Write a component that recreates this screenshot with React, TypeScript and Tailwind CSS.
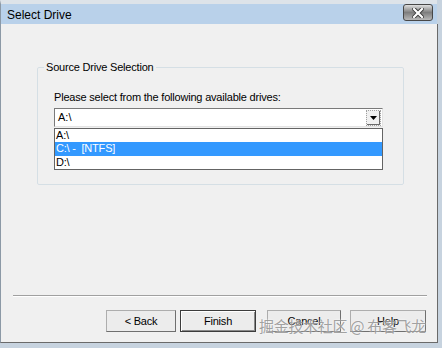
import React from 'react';

const drives = ['A:\\', 'C:\\ -  [NTFS]', 'D:\\'];

function WinButton({ label, primary }: { label: string; primary?: boolean }) {
  return (
    <button
      className={
        'h-[22px] bg-[#ececec] text-[11px] tracking-[-0.2px] text-black ' +
        (primary
          ? 'border border-[#3c3c3c] shadow-[inset_1px_1px_0_#ffffff,inset_-1px_-1px_0_#8a8a8a]'
          : 'border border-[#adadad] border-r-[#6f6f6f] border-b-[#6f6f6f]')
      }
    >
      {label}
    </button>
  );
}

export default function App() {
  const selected = 1;

  return (
    <div className="relative w-[442px] h-[348px] overflow-hidden bg-[#c7d3df] flex flex-col font-['Liberation_Sans',Arial,sans-serif]">
      {/* title bar */}
      <div className="h-[24px] border-t-[4px] border-[#dde3e9] bg-[#b9d1ea] border-l border-l-[#8c99a6] mr-[5px] flex items-center justify-between pl-[6px] pr-[4px]">
        <span className="text-[12px] text-black leading-none mt-[1px]">Select Drive</span>
        <div className="w-[30px] h-[17px] -mt-[3px] rounded-[3px] border border-[#474747] bg-gradient-to-b from-[#e0e0e0] via-[#7e7e7e] to-[#b8b8b8] flex items-center justify-center">
          <svg width="12" height="10" viewBox="0 0 12 10">
            <path d="M2 1 L10 9 M10 1 L2 9" stroke="#3a3a3a" strokeWidth="4" strokeLinecap="square" />
            <path d="M2 1 L10 9 M10 1 L2 9" stroke="#ffffff" strokeWidth="2.2" strokeLinecap="square" />
          </svg>
        </div>
      </div>

      {/* body */}
      <div className="flex-1 mb-[5px] mr-[4px] bg-[#f0f0f0] border-l border-l-[#8c99a6] border-r border-r-[#6a6a6a] border-b border-b-[#6a6a6a] flex flex-col text-black">
        <fieldset className="ml-[36px] mt-[36px] w-[367px] border border-[#d5dfe5] rounded-[2px] pl-[16px] pb-[14px]">
          <legend className="-ml-[10px] px-[2px] text-[11px] tracking-[-0.2px] leading-[14px]">Source Drive Selection</legend>
          <p className="mt-[16px] text-[11px] tracking-[-0.2px] leading-[14px]">Please select from the following available drives:</p>

          {/* combo box */}
          <div className="mt-[4px] w-[329px] h-[19px] bg-white border border-[#7a7a7a] border-r-[#e3e3e3] border-b-[#e3e3e3] flex items-center justify-between">
            <span className="pl-[3px] text-[11px] leading-none">A:\</span>
            <div className="w-[15px] h-[16px] mr-[1px] border border-dotted border-[#a0a0a0] bg-[#f0f0f0] shadow-[inset_-1px_-1px_0_#6a6a6a] flex items-center justify-center">
              <svg width="7" height="4" viewBox="0 0 7 4">
                <path d="M0 0 H7 L3.5 4 Z" fill="#000" />
              </svg>
            </div>
          </div>

          {/* dropdown list */}
          <ul className="mt-[1px] w-[329px] bg-white border border-[#646464] flex flex-col">
            {drives.map((d, i) => (
              <li
                key={d}
                className={
                  'h-[13px] pl-[1px] text-[11px] tracking-[-0.2px] leading-[13px] whitespace-pre ' +
                  (i === selected ? 'bg-[#3399ff] text-white h-[14px]' : 'text-black')
                }
              >
                {d}
              </li>
            ))}
          </ul>
        </fieldset>

        {/* separator + buttons */}
        <div className="mt-auto ml-[12px] mr-[10px] border-t border-t-[#a0a0a0] border-b border-b-[#ffffff]" />
        <div className="flex items-center mt-[13px] mb-[10px] pl-[105px]">
          <div className="grid grid-cols-[70px_76px] gap-[4px]">
            <WinButton label="< Back" />
            <WinButton label="Finish" primary />
          </div>
          <div className="grid grid-cols-[74px_76px] gap-[9px] ml-[11px]">
            <WinButton label="Cancel" />
            <WinButton label="Help" />
          </div>
        </div>
      </div>

      {/* watermark */}
      <span className="absolute left-[259px] top-[318px] whitespace-nowrap text-[15px] leading-none text-[#8a8a8a]/80 tracking-[-0.3px] [text-shadow:0_0_2px_#ffffff] font-['Noto_Sans_CJK_SC',sans-serif] pointer-events-none">
        掘金技术社区 @ 布客飞龙
      </span>
    </div>
  );
}
